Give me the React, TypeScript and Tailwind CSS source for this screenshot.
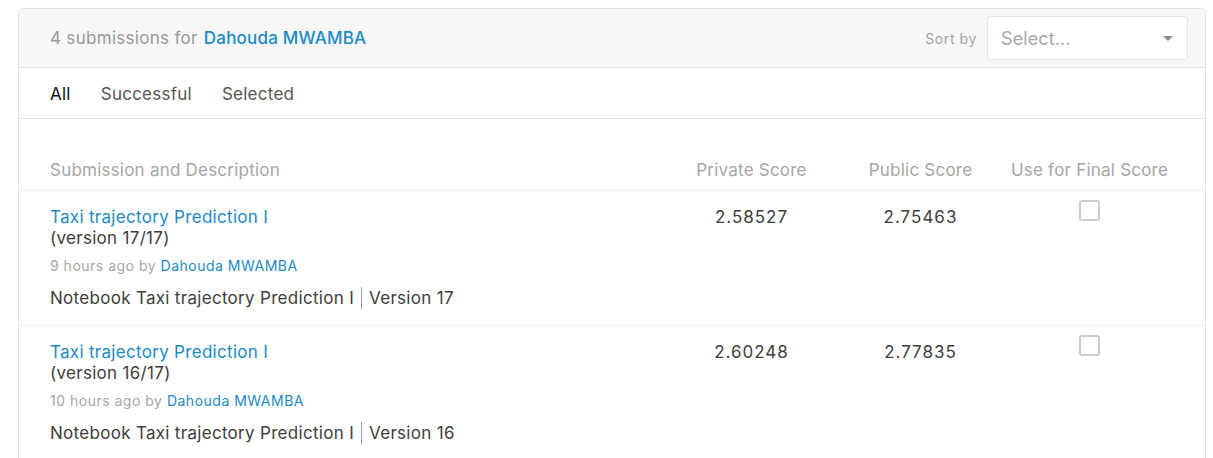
type Submission = {
  title: string;
  version: string;
  ago: string;
  author: string;
  notebook: string;
  ver: string;
  privateScore: string;
  publicScore: string;
};

const submissions: Submission[] = [
  {
    title: "Taxi trajectory Prediction I",
    version: "(version 17/17)",
    ago: "9 hours ago by",
    author: "Dahouda MWAMBA",
    notebook: "Notebook Taxi trajectory Prediction I",
    ver: "Version 17",
    privateScore: "2.58527",
    publicScore: "2.75463",
  },
  {
    title: "Taxi trajectory Prediction I",
    version: "(version 16/17)",
    ago: "10 hours ago by",
    author: "Dahouda MWAMBA",
    notebook: "Notebook Taxi trajectory Prediction I",
    ver: "Version 16",
    privateScore: "2.60248",
    publicScore: "2.77835",
  },
];

function App() {
  return (
    <div className="min-h-screen bg-white pt-2 pl-[18px] font-['Inter',sans-serif] tracking-[0.3px]">
      <div className="w-[1188px] rounded-t-[5px] border border-[#e3e3e3] border-b-0">
        {/* Header */}
        <div className="flex h-[59px] items-center justify-between rounded-t-[5px] bg-[#f7f7f7] pl-[31px] pr-[17px] border-b border-[#e3e3e3]">
          <div className="pt-[2px] text-[17px] text-[#999999]">
            4 submissions for{" "}
            <span className="ml-[1px] font-medium tracking-[0.2px] text-[#1b8bc5]">Dahouda MWAMBA</span>
          </div>
          <div className="flex items-center gap-[10px]">
            <span className="text-[14px] tracking-[0.6px] text-[#a3a3a3]">Sort by</span>
            <div className="flex h-[44px] w-[201px] items-center justify-between rounded-[4px] border border-[#e6e6e6] bg-white pl-[13px] pr-[14px]">
              <span className="text-[18px] tracking-[0.1px] text-[#a8a8a8]">Select...</span>
              <span className="h-0 w-0 border-x-[5px] border-t-[5px] border-x-transparent border-t-[#8c8c8c]" />
            </div>
          </div>
        </div>

        {/* Tabs */}
        <div className="flex h-[51px] items-center gap-[30px] border-b border-[#e3e3e3] pl-[31px] pt-[3px] text-[17px] tracking-[0.25px]">
          <span className="text-[#111111]">All</span>
          <span className="text-[#555555]">Successful</span>
          <span className="text-[#555555]">Selected</span>
        </div>

        {/* Table head */}
        <div className="flex border-b border-[#eeeeee] px-[31px] pt-[41px] pb-[9px] text-[17px] leading-[21px] tracking-[0.22px] text-[#a6a6a6]">
          <div className="flex-1">Submission and Description</div>
          <div className="w-[169px] text-center">Private Score</div>
          <div className="w-[169px] text-center">Public Score</div>
          <div className="w-[169px] text-center">Use for Final Score</div>
        </div>

        {/* Rows */}
        {submissions.map((s, i) => (
          <div key={i} className="flex border-b border-[#eeeeee] px-[31px] pt-[16px] pb-[16px]">
            <div className="flex-1">
              <div className="text-[17px] leading-[21px] text-[#1b8bc5]">{s.title}</div>
              <div className="text-[17px] leading-[21px] text-[#3d3d3d]">{s.version}</div>
              <div className="mt-[7px] text-[14px] leading-[20px] tracking-[0.5px] text-[#a6a6a6]">
                {s.ago} <span className="text-[#1b8bc5]">{s.author}</span>
              </div>
              <div className="mt-[11px] flex items-center text-[17px] leading-[21px] text-[#3d3d3d]">
                {s.notebook}
                <span className="mx-[7px] inline-block h-[22px] w-px bg-[#8a9aaa]" />
                {s.ver}
              </div>
            </div>
            <div className="w-[169px] text-center text-[17px] leading-[21px] tracking-[1px] text-[#3d3d3d]">{s.privateScore}</div>
            <div className="w-[169px] text-center text-[17px] leading-[21px] tracking-[1px] text-[#3d3d3d]">{s.publicScore}</div>
            <div className="flex w-[169px] justify-center">
              <div className="-mt-[7px] h-[21px] w-[21px] rounded-[3px] border-2 border-[#cccccc] bg-white" />
            </div>
          </div>
        ))}
      </div>
    </div>
  );
}

export default App;
